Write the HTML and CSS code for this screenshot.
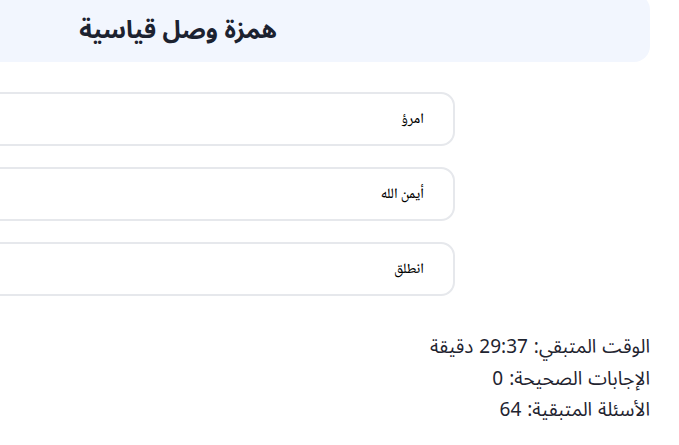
FILE: index.html
```html
<!DOCTYPE html>
<html lang="ar" dir="rtl">
<head>
<meta charset="utf-8">
<title>همزة وصل قياسية</title>
<link rel="stylesheet" href="styles.css">
</head>
<body>
<main class="page">
  <header class="quiz-header">
    <h1 class="quiz-title">همزة وصل قياسية</h1>
  </header>
  <section class="options">
    <div class="option">امرؤ</div>
    <div class="option">أيمن الله</div>
    <div class="option">انطلق</div>
  </section>
  <section class="stats">
    <p class="stat">الوقت المتبقي: 29:37 دقيقة</p>
    <p class="stat">الإجابات الصحيحة: 0</p>
    <p class="stat">الأسئلة المتبقية: 64</p>
  </section>
</main>
</body>
</html>
```
FILE: styles.css
```css
html, body {
  margin: 0;
  padding: 0;
  background: #ffffff;
  overflow: hidden;
}
body {
  direction: rtl;
  font-family: "Noto Sans Arabic", "Noto Sans", sans-serif;
  color: #1f2430;
}
.page {
  padding-right: 29px;
}
.quiz-header {
  width: 1000px;
  height: 68px;
  margin-top: -6px;
  box-sizing: border-box;
  background: #f2f6fe;
  border-radius: 16px;
  display: flex;
  align-items: center;
  padding-right: 373px;
}
.quiz-title {
  margin: 0;
  padding-top: 6px;
  font-size: 24.5px;
  font-weight: 700;
  line-height: 1.3;
  color: #1c2230;
}
.options {
  width: 700px;
  margin-top: 30px;
  margin-right: 195px;
  display: flex;
  flex-direction: column;
  gap: 21px;
}
.option {
  height: 54px;
  box-sizing: border-box;
  border: 2px solid #e6e8ec;
  border-radius: 14px;
  display: flex;
  align-items: center;
  padding-right: 29px;
  font-family: "Noto Naskh Arabic", serif;
  font-size: 14.5px;
  font-weight: 500;
  color: #000000;
}
.stats {
  margin-top: 36px;
}
.stat {
  margin: 0;
  font-size: 19px;
  line-height: 31.5px;
  word-spacing: 1px;
  color: #1f2430;
}
```
